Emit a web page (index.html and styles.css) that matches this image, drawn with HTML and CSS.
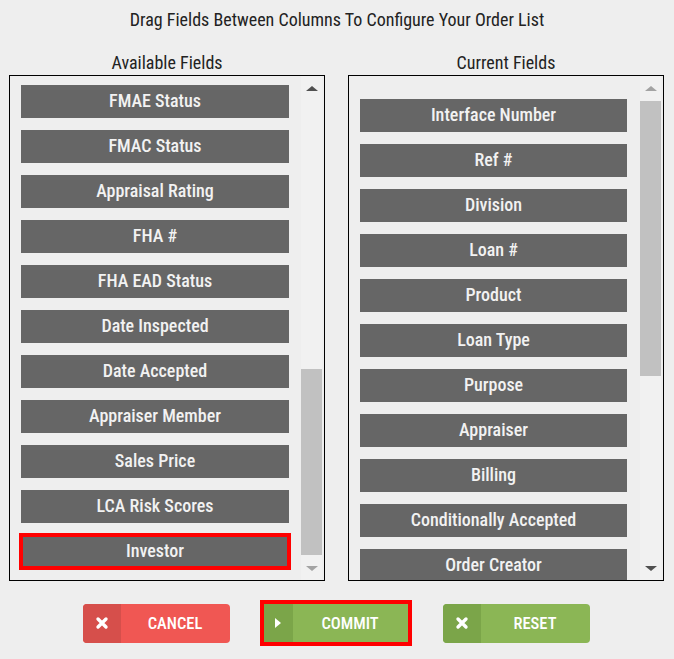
FILE: index.html
```html
<!DOCTYPE html>
<html>
<head>
<meta charset="utf-8">
<link rel="stylesheet" href="styles.css">
</head>
<body>
<div class="dialog">
  <div class="title">Drag Fields Between Columns To Configure Your Order List</div>
  <div class="columns">
    <div class="col">
      <div class="col-label">Available Fields</div>
      <div class="panel">
        <div class="list list-left">
          <div class="item">FMAE Status</div>
          <div class="item">FMAC Status</div>
          <div class="item">Appraisal Rating</div>
          <div class="item">FHA #</div>
          <div class="item">FHA EAD Status</div>
          <div class="item">Date Inspected</div>
          <div class="item">Date Accepted</div>
          <div class="item">Appraiser Member</div>
          <div class="item">Sales Price</div>
          <div class="item">LCA Risk Scores</div>
          <div class="item selected">Investor</div>
        </div>
        <div class="scrollbar">
          <div class="arrow"><span class="tri-up dark"></span></div>
          <div class="track track-left"><div class="thumb thumb-left"></div></div>
          <div class="arrow"><span class="tri-down light"></span></div>
        </div>
      </div>
    </div>
    <div class="col">
      <div class="col-label">Current Fields</div>
      <div class="panel">
        <div class="list list-right">
          <div class="item">Interface Number</div>
          <div class="item">Ref #</div>
          <div class="item">Division</div>
          <div class="item">Loan #</div>
          <div class="item">Product</div>
          <div class="item">Loan Type</div>
          <div class="item">Purpose</div>
          <div class="item">Appraiser</div>
          <div class="item">Billing</div>
          <div class="item">Conditionally Accepted</div>
          <div class="item">Order Creator</div>
        </div>
        <div class="scrollbar">
          <div class="arrow"><span class="tri-up light"></span></div>
          <div class="track track-right"><div class="thumb thumb-right"></div></div>
          <div class="arrow"><span class="tri-down dark"></span></div>
        </div>
      </div>
    </div>
  </div>
  <div class="buttons">
    <button class="btn btn-cancel">
      <span class="btn-icon"><svg width="14" height="14" viewBox="0 0 14 14"><path d="M3 3 L11 11 M11 3 L3 11" stroke="#fff" stroke-width="3.4" stroke-linecap="round"/></svg></span>
      <span class="btn-text">CANCEL</span>
    </button>
    <button class="btn btn-commit">
      <span class="btn-icon"><svg width="8" height="12" viewBox="0 0 8 12"><path d="M1 1 L7 6 L1 11 Z" fill="#fff"/></svg></span>
      <span class="btn-text">COMMIT</span>
    </button>
    <button class="btn btn-reset">
      <span class="btn-icon"><svg width="14" height="14" viewBox="0 0 14 14"><path d="M3 3 L11 11 M11 3 L3 11" stroke="#fff" stroke-width="3.4" stroke-linecap="round"/></svg></span>
      <span class="btn-text">RESET</span>
    </button>
  </div>
</div>
</body>
</html>
```
FILE: styles.css
```css
html, body {
  margin: 0;
  padding: 0;
  background: #eeeeee;
}
body {
  font-family: Roboto, "Liberation Sans", sans-serif;
  font-stretch: condensed;
  color: #222;
  width: 674px;
  height: 659px;
  overflow: hidden;
}
.dialog {
  display: flex;
  flex-direction: column;
}
.title {
  text-align: center;
  font-size: 18px;
  line-height: 22px;
  padding-top: 9px;
}
.columns {
  display: flex;
  gap: 23px;
  padding: 0 10px 0 9px;
  margin-top: 21px;
}
.col {
  width: 316px;
  display: flex;
  flex-direction: column;
}
.col-label {
  text-align: center;
  font-size: 18px;
  line-height: 22px;
  height: 23px;
}
.panel {
  border: 1px solid #000;
  height: 504px;
  display: flex;
  overflow: hidden;
}
.list {
  flex: 1;
  display: flex;
  flex-direction: column;
  gap: 12px;
  padding: 0 12px 0 11px;
  overflow: hidden;
}
.list-left { padding-top: 9px; }
.list-right { padding-top: 23px; padding-right: 13px; }
.item {
  flex: 0 0 33px;
  box-sizing: border-box;
  padding-bottom: 2px;
  background: #666666;
  color: #f2f2f2;
  font-size: 18px;
  font-weight: 500;
  line-height: 31px;
  text-align: center;
}
.item.selected {
  outline: 4px solid #f00;
  outline-offset: -2px;
}
.scrollbar {
  width: 21px;
  margin-right: 2px;
  background: #f1f1f1;
  display: flex;
  flex-direction: column;
}
.arrow {
  height: 24px;
  flex: 0 0 24px;
  display: flex;
  align-items: center;
  justify-content: center;
}
.tri-up, .tri-down {
  width: 0;
  height: 0;
  border-left: 6px solid transparent;
  border-right: 6px solid transparent;
}
.tri-up { border-bottom: 5px solid #505050; }
.tri-down { border-top: 5px solid #505050; }
.tri-up.light { border-bottom-color: #a3a3a3; }
.tri-down.light { border-top-color: #a3a3a3; }
.track {
  flex: 1;
  display: flex;
  flex-direction: column;
}
.thumb {
  background: #c1c1c1;
}
.track-left { justify-content: flex-end; }
.thumb-left { height: 186px; margin-bottom: 1px; }
.thumb-right { height: 275px; margin-top: 1px; }
.buttons {
  display: flex;
  justify-content: center;
  align-items: center;
  gap: 30px;
  margin-top: 19px;
  padding-right: 2px;
}
.btn {
  border: none;
  padding: 0;
  margin: 0;
  width: 147px;
  height: 39px;
  border-radius: 4px;
  display: flex;
  align-items: stretch;
  overflow: hidden;
  font-family: Roboto, "Liberation Sans", sans-serif;
  font-stretch: condensed;
  font-size: 16.5px;
  font-weight: 500;
  color: #fff;
  cursor: pointer;
}
.btn-icon {
  width: 38px;
  flex: 0 0 38px;
  display: flex;
  align-items: center;
  justify-content: center;
}
.btn-text {
  flex: 1;
  display: flex;
  align-items: center;
  justify-content: center;
}
.btn-cancel { background: #f05753; }
.btn-cancel .btn-icon { background: #d64f4b; }
.btn-commit {
  width: 152px;
  height: 46px;
  border: 4px solid #f00;
  border-radius: 0;
  background: #8bb655;
}
.btn-commit .btn-icon { background: #7ba549; width: 29px; flex-basis: 29px; }
.btn-reset { background: #8bb655; margin-left: 1px; }
.btn-reset .btn-icon { background: #7ba549; }
```
